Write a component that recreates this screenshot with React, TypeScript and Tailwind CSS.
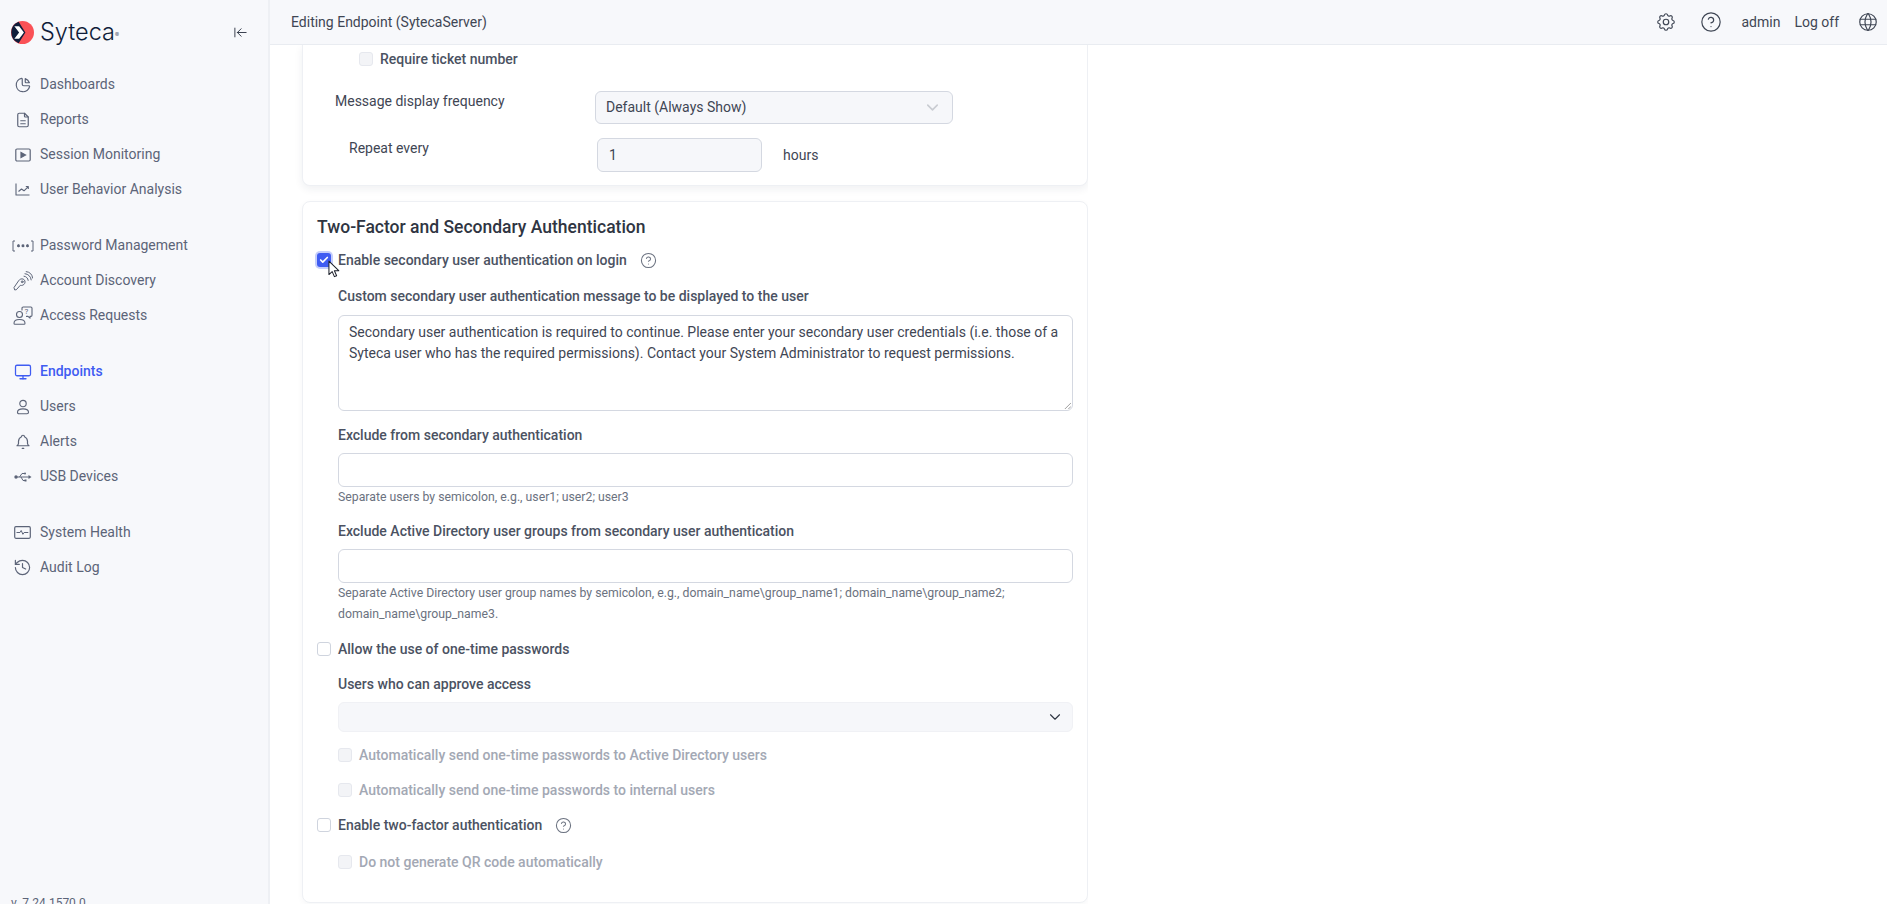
import React from "react";
import { Monitor, History, ChevronDown, CircleHelp, ArrowLeftToLine, Check } from "lucide-react";

type P = { className?: string };
const T = ({ size = 18, sw = 1.4, children, className }: { size?: number; sw?: number; children: React.ReactNode; className?: string }) => (
  <svg viewBox="0 0 24 24" width={size} height={size} fill="none" stroke="currentColor" strokeWidth={sw} strokeLinecap="round" strokeLinejoin="round" className={className}>
    {children}
  </svg>
);
const PieIcon = () => (
  <T sw={1.6}><path d="M10 3.2a9 9 0 1 0 10.800 10.800a1 1 0 0 0 -1 -1h-6.800a2 2 0 0 1 -2 -2v-7a.9 .9 0 0 0 -1 -.8" /><path d="M15 3.500a9 9 0 0 1 5.500 5.500h-4.500a1 1 0 0 1 -1 -1v-4.500" /></T>
);
const FileIcon = () => (
  <T sw={1.6}><path d="M14 3v4a1 1 0 0 0 1 1h4" /><path d="M17 21h-10a2 2 0 0 1 -2 -2v-14a2 2 0 0 1 2 -2h7l5 5v11a2 2 0 0 1 -2 2z" /><path d="M9 13h6M9 17h6" /></T>
);
const Play = ({ className }: P) => (
  <svg viewBox="0 0 16 14" width="16" height="14" fill="none" stroke="currentColor" strokeWidth="1.2" className={className}>
    <rect x="0.800" y="1" width="14.400" height="12" rx="1.200" />
    <path d="M6 4.500 10.500 7 6 9.500Z" fill="currentColor" />
  </svg>
);
const LineIcon = () => (
  <svg viewBox="0 0 15 13" width="15" height="13" fill="none" stroke="currentColor" strokeWidth="1.100" strokeLinejoin="round">
    <path d="M1 .500V12h13.500" />
    <path d="M3.500 8.500 6.500 6l2.500 1.800 4-4M10.800 3.500h2.500V6" />
  </svg>
);
const Pass = ({ className }: P) => (
  <svg viewBox="0 0 22 12" width="22" height="12" fill="none" stroke="currentColor" strokeWidth="1" className={className}>
    <path d="M3 1H1v10h2M19 1h2v10h-2" />
    <path d="M6.500 4.200v3M5.200 5l2.600 1.500M7.800 5 5.200 6.500M11 4.200v3M9.700 5l2.600 1.500M12.300 5 9.700 6.500M15.500 4.200v3M14.200 5l2.600 1.500M16.800 5l-2.600 1.500" strokeWidth="1.100" />
  </svg>
);
const KeyWave = ({ className }: P) => (
  <svg viewBox="0 0 20 20" width="20" height="20" fill="none" stroke="currentColor" strokeWidth="1" strokeLinecap="round" strokeLinejoin="round" className={className}>
    <path d="M1.500 18.500 1 16.500 5.600 9.800c1-1.600 3-2.400 4.600-1.700 1.700.7 2.300 2.700 1.500 4.300-.8 1.600-2.700 2.400-4.400 1.900L3.500 18.500Z" />
    <circle cx="9.200" cy="10.800" r=".9" />
    <path d="M11 5.200c2.300.2 4 2 4.200 4.200M12 2.700c3.400.3 5.900 2.900 6.200 6.200M13.200.6C17 1 19.300 3.500 19.600 7" />
  </svg>
);
const AccessReq = ({ className }: P) => (
  <svg viewBox="0 0 20 19" width="20" height="19" fill="none" stroke="currentColor" strokeWidth="1.100" strokeLinecap="round" strokeLinejoin="round" className={className}>
    <circle cx="6.500" cy="8.500" r="3" />
    <path d="M1 17.200c0-2.600 2.200-3.700 5.500-3.700s5.500 1.100 5.500 3.700c0 .7-.4 1.100-1 1.100H2c-.6 0-1-.4-1-1.100Z" />
    <path d="M9 4V2.200C9 1.500 9.500 1 10.200 1h7.600c.7 0 1.200.5 1.200 1.200v7c0 .7-.5 1.200-1.200 1.200h-.8l0 1.800-2-1.800h-1.500" />
    <text x="11.600" y="8.300" fontSize="8" stroke="none" fill="currentColor" fontFamily="Roboto, sans-serif">?</text>
  </svg>
);
const MonitorIcon = () => <Monitor size={18} strokeWidth={1.7} />;
const UserIcon = () => (
  <svg viewBox="0 0 14 16" width="14" height="16" fill="none" stroke="currentColor" strokeWidth="1.150" strokeLinejoin="round">
    <circle cx="7" cy="4.500" r="3.200" />
    <path d="M1.500 13.200c0-2.200 2-3.300 5.500-3.300s5.500 1.100 5.500 3.300c0 1-.5 1.500-1.500 1.500H3c-1 0-1.500-.5-1.500-1.500Z" />
  </svg>
);
const BellIcon = () => (
  <T sw={1.6}><path d="M10 5a2 2 0 1 1 4 0a7 7 0 0 1 4 6v3a4 4 0 0 0 2 3h-16a4 4 0 0 0 2 -3v-3a7 7 0 0 1 4 -6" /><path d="M11 20.500h2" /></T>
);
const UsbIcon = () => (
  <svg viewBox="0 0 18 12" width="18" height="12" fill="none" stroke="currentColor" strokeWidth="1">
    <circle cx="2" cy="6" r="1.700" fill="currentColor" stroke="none" />
    <path d="M2 6h13.500" />
    <path d="M14.500 4 17.500 6l-3 2Z" fill="currentColor" stroke="none" />
    <path d="M5.500 6 8 2.500h2.500M7 6l2 3.500h2" />
    <circle cx="11" cy="2.500" r="1" fill="currentColor" stroke="none" />
    <rect x="10.500" y="8.500" width="2" height="2" fill="currentColor" stroke="none" />
  </svg>
);
const Health = ({ className }: P) => (
  <svg viewBox="0 0 17 13" width="17" height="13" fill="none" stroke="currentColor" strokeWidth="1.200" strokeLinejoin="round" className={className}>
    <rect x="0.700" y="0.700" width="15.600" height="11.600" rx="1.200" />
    <path d="M2.500 6.500h3.500l1.200-2 1.700 3.800 1.200-1.800h4.200" strokeWidth="1" />
  </svg>
);
const HistoryIcon = () => <History size={19} strokeWidth={1.500} />;

const groups: { label: string; Icon: React.ComponentType<any>; active?: boolean }[][] = [
  [
    { label: "Dashboards", Icon: PieIcon },
    { label: "Reports", Icon: FileIcon },
    { label: "Session Monitoring", Icon: Play },
    { label: "User Behavior Analysis", Icon: LineIcon },
  ],
  [
    { label: "Password Management", Icon: Pass },
    { label: "Account Discovery", Icon: KeyWave },
    { label: "Access Requests", Icon: AccessReq },
  ],
  [
    { label: "Endpoints", Icon: MonitorIcon, active: true },
    { label: "Users", Icon: UserIcon },
    { label: "Alerts", Icon: BellIcon },
    { label: "USB Devices", Icon: UsbIcon },
  ],
  [
    { label: "System Health", Icon: Health },
    { label: "Audit Log", Icon: HistoryIcon },
  ],
];

const Box = ({ disabled }: { disabled?: boolean }) => (
  <span className={`inline-block w-[14px] h-[14px] mb-[2px] rounded-[3px] border shrink-0 ${disabled ? "bg-[#f3f4f7] border-[#e6e8ee]" : "bg-white border-[#cfd4de]"}`} />
);

const Help = () => <CircleHelp size={17} strokeWidth={1.500} className="text-[#6b7280] shrink-0" />;

const Label = ({ children, className = "" }: { children: React.ReactNode; className?: string }) => (
  <div className={`h-[21px] leading-[21px] font-medium text-[#4b5262] ${className}`}>{children}</div>
);

const Hint = ({ children }: { children: React.ReactNode }) => (
  <div className="text-[12.250px] leading-[21px] text-[#6b7280]">{children}</div>
);

const CheckRow = ({ children, disabled, className = "" }: { children: React.ReactNode; disabled?: boolean; className?: string }) => (
  <div className={`flex items-center h-[21px] gap-[7px] font-medium ${disabled ? "text-[#a3a8b4]" : "text-[#4b5262]"} ${className}`}>
    <Box disabled={disabled} />
    <span>{children}</span>
  </div>
);

const inputCls = "block w-full h-[34px] rounded-[6px] border border-[#d4d8e1] bg-white";

export default function App() {
  return (
    <div className="flex h-screen w-full overflow-hidden bg-white text-[14px] text-[#3f4654]" style={{ fontFamily: "Roboto, 'Liberation Sans', sans-serif" }}>
      <aside className="w-[270px] shrink-0 h-screen overflow-hidden bg-[#f7f8fb] border-r-2 border-[#eef0f4] flex flex-col">
        <div className="h-[64px] shrink-0 flex items-center pl-[11px] pr-[20px] justify-between">
          <div className="flex items-center gap-[6px]">
            <svg viewBox="0 0 24 24" width="23" height="23">
              <circle cx="12" cy="12" r="12" fill="#fa5156" />
              <path d="M8 0.800A12 12 0 0 0 8 23.200L15 12Z" fill="#101d3a" />
              <path d="M3.500 5.500H8.500L13.500 12 8.500 18.500H3.500L8.500 12Z" fill="#fff" />
            </svg>
            <span className="text-[23.500px] font-light text-[#101d3a] leading-none" style={{ fontFamily: "Inter, sans-serif" }}>Syteca<sup className="text-[6px]">®</sup></span>
          </div>
          <ArrowLeftToLine size={15} strokeWidth={1.500} className="text-[#2f3645]" />
        </div>
        <nav className="flex flex-col gap-[21px] mt-[3px] shrink-0">
          {groups.map((g, i) => (
            <ul key={i} className="flex flex-col">
              {g.map(({ label, Icon, active }) => (
                <li key={label} className={`h-[35px] flex items-center ${active ? "font-medium text-[#3f5cf2]" : "text-[#5c6478]"}`}>
                  <span className="w-[40px] shrink-0 pl-[11px] pr-[6px] flex justify-center">
                    <Icon />
                  </span>
                  <span>{label}</span>
                </li>
              ))}
            </ul>
          ))}
        </nav>
        <div className="mt-[310px] shrink-0 pl-[11px] leading-[16px] text-[#5c6478] text-[12px] whitespace-nowrap">v. 7.24.1570.0</div>
      </aside>

      <div className="flex-1 min-w-0 flex flex-col h-screen">
        <header className="h-[45px] shrink-0 bg-[#f7f8fb] border-b border-[#e9ecf1] flex items-center justify-between pl-[21px] pr-[8px]">
          <span className="text-[#3f4654]">Editing Endpoint (SytecaServer)</span>
          <div className="flex items-center text-[#3f4654]">
            <T size={22} sw={1.300}>
              <path d="M10.325 4.317c.426 -1.756 2.924 -1.756 3.350 0a1.724 1.724 0 0 0 2.573 1.066c1.543 -.94 3.310 .826 2.370 2.370a1.724 1.724 0 0 0 1.065 2.572c1.756 .426 1.756 2.924 0 3.350a1.724 1.724 0 0 0 -1.066 2.573c.94 1.543 -.826 3.310 -2.370 2.370a1.724 1.724 0 0 0 -2.572 1.065c-.426 1.756 -2.924 1.756 -3.350 0a1.724 1.724 0 0 0 -2.573 -1.066c-1.543 .94 -3.310 -.826 -2.370 -2.370a1.724 1.724 0 0 0 -1.065 -2.572c-1.756 -.426 -1.756 -2.924 0 -3.350a1.724 1.724 0 0 0 1.066 -2.573c-.94 -1.543 .826 -3.310 2.370 -2.370c1 .608 2.296 .07 2.572 -1.065z" />
              <circle cx="12" cy="12" r="3" />
            </T>
            <CircleHelp size={22} strokeWidth={1.300} className="ml-[23px]" />
            <span className="ml-[19px]">admin</span>
            <span className="ml-[14px]">Log off</span>
            <T size={22} sw={1.300} className="ml-[18px]">
              <circle cx="12" cy="12" r="9" />
              <path d="M3.600 9h16.800M3.600 15h16.800M11.500 3a17 17 0 0 0 0 18M12.500 3a17 17 0 0 1 0 18" />
            </T>
          </div>
        </header>

        <main className="flex-1 min-h-0 overflow-hidden pl-[32px] w-[818px]">
          <section className="h-[141px] rounded-b-[8px] bg-white border border-t-0 border-[#eef0f4] shadow-[0_3px_8px_rgba(30,40,70,0.07)] flex flex-col">
            <div className="flex items-center h-[21px] mt-[4px] ml-[56px] gap-[7px] font-medium text-[#4b5262]">
              <Box disabled />
              <span>Require ticket number</span>
            </div>
            <div className="flex mt-[21px] items-start">
              <div className="w-[292px] pl-[32px] h-[21px] leading-[21px] text-[#3f4654]">Message display frequency</div>
              <div className="w-[358px] h-[33px] rounded-[6px] border border-[#d4d8e1] bg-[#f6f7fa] flex items-center justify-between pl-[10px] pr-[10px]">
                <span>Default (Always Show)</span>
                <ChevronDown size={19} strokeWidth={2} className="text-[#c9ccd2]" />
              </div>
            </div>
            <div className="flex mt-[14px] items-start">
              <div className="w-[294px] pl-[46px] h-[21px] leading-[21px] text-[#3f4654]">Repeat every</div>
              <div className="w-[165px] h-[34px] rounded-[6px] border border-[#d4d8e1] bg-[#f6f7fa] flex items-center pl-[11px]">1</div>
              <div className="ml-[21px] h-[34px] flex items-center">hours</div>
            </div>
          </section>

          <section className="mt-[15px] h-[702px] rounded-[8px] bg-white border border-[#eef0f4] shadow-[0_2px_6px_rgba(30,40,70,0.04)] pl-[14px] pr-[14px] pt-[12px]">
            <h2 className="text-[17.500px] leading-[26px] font-medium text-[#2f3542]">Two-Factor and Secondary Authentication</h2>
            <div className="relative flex items-center h-[21px] gap-[7px] mt-[10px] font-medium text-[#4b5262]">
              <span className="w-[14px] h-[14px] mb-[2px] rounded-[3px] bg-[#3f5cf2] shadow-[0_0_0_2px_rgba(63,92,242,0.3)] flex items-center justify-center shrink-0">
                <Check size={10} strokeWidth={4} className="text-white" />
              </span>
              <span>Enable secondary user authentication on login</span>
              <span className="ml-[6px] flex"><Help /></span>
              <svg viewBox="0 0 14 20" width="13" height="19" className="absolute left-[11px] top-[10px]">
                <path d="M1 1v14.500l3.500-3.200 2.400 5.400 2.400-1-2.400-5.400h4.700Z" fill="#fff" stroke="#1b1f2a" strokeWidth="1.100" strokeLinejoin="round" />
              </svg>
            </div>
            <div className="pl-[21px]">
              <Label className="mt-[15px]">Custom secondary user authentication message to be displayed to the user</Label>
              <div className="mt-[8px] h-[96px] rounded-[6px] border border-[#d4d8e1] bg-white px-[10px] pt-[6px] leading-[21px] text-[#3f4654] relative">
                Secondary user authentication is required to continue. Please enter your secondary user credentials (i.e. those of a Syteca user who has the required permissions). Contact your System Administrator to request permissions.
                <svg viewBox="0 0 8 8" width="7" height="7" className="absolute right-[1px] bottom-[1px] text-[#777]" stroke="currentColor" strokeWidth="0.800"><path d="M8 1 1 8M8 5 5 8" /></svg>
              </div>
              <Label className="mt-[14px]">Exclude from secondary authentication</Label>
              <div className={`${inputCls} mt-[7px]`} />
              <Hint>Separate users by semicolon, e.g., user1; user2; user3</Hint>
              <Label className="mt-[13px]">Exclude Active Directory user groups from secondary user authentication</Label>
              <div className={`${inputCls} mt-[7px]`} />
              <Hint>Separate Active Directory user group names by semicolon, e.g., domain_name\group_name1; domain_name\group_name2;<br />domain_name\group_name3.</Hint>
            </div>
            <CheckRow className="mt-[14px]">Allow the use of one-time passwords</CheckRow>
            <div className="pl-[21px]">
              <Label className="mt-[14px]">Users who can approve access</Label>
              <div className="mt-[7px] h-[30px] rounded-[6px] border border-[#f0f1f5] bg-[#f6f7fa] flex items-center justify-end pr-[8px]">
                <ChevronDown size={18} strokeWidth={1.500} className="text-[#2f3542]" />
              </div>
              <CheckRow disabled className="mt-[13px]">Automatically send one-time passwords to Active Directory users</CheckRow>
              <CheckRow disabled className="mt-[14px]">Automatically send one-time passwords to internal users</CheckRow>
            </div>
            <div className="flex items-center h-[21px] gap-[7px] mt-[14px] font-medium text-[#4b5262]">
              <Box />
              <span>Enable two-factor authentication</span>
              <span className="ml-[6px] flex"><Help /></span>
            </div>
            <div className="pl-[21px]">
              <CheckRow disabled className="mt-[16px]">Do not generate QR code automatically</CheckRow>
            </div>
          </section>
        </main>
      </div>
    </div>
  );
}
